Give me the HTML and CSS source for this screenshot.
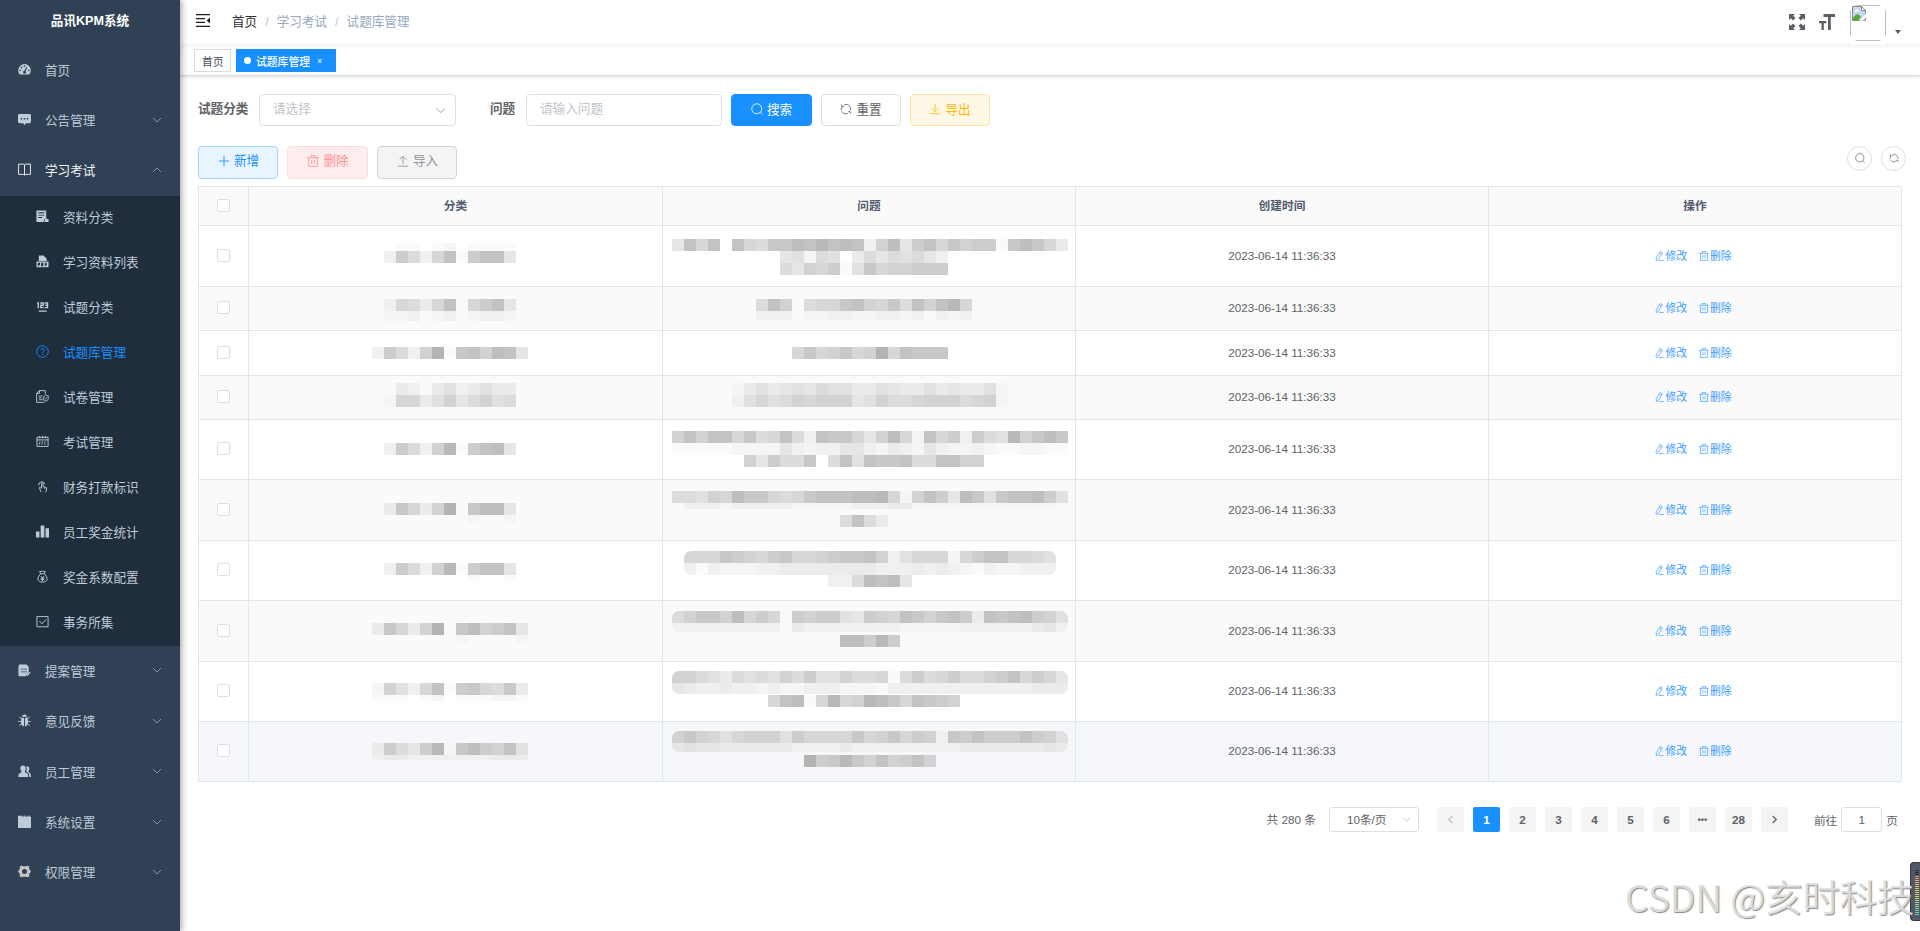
FILE: index.html
```html
<!DOCTYPE html>
<html lang="zh-CN">
<head>
    <meta charset="utf-8">
    <title>试题库管理 - 品讯KPM系统</title>
    <link rel="stylesheet" href="styles.css">
</head>
<body>
    <svg class="sprite">
        <symbol id="i-down" viewBox="0 0 10 10"><path d="M1 3l4 4 4-4" class="line"/></symbol>
        <symbol id="i-up" viewBox="0 0 10 10"><path d="M1 7l4-4 4 4" class="line"/></symbol>
        <symbol id="i-dash" viewBox="0 0 14 14"><path fill-rule="evenodd" d="M2 12.5A7 7 0 0 1 .2 8a6.8 6.8 0 0 1 13.6 0A7 7 0 0 1 12 12.5zM6.2 2.5v1.6h1.6V2.5zM3 4v1.6h1.6V4zM1.6 7.2v1.5h1.6V7.2zM10.8 7.2v1.5h1.6V7.2zM9 4.2L6.8 8.3a1.6 1.6 0 1 0 1.3.4l2-3.9z"/></symbol>
        <symbol id="i-msg" viewBox="0 0 14 14"><path fill-rule="evenodd" d="M1.500 1h11Q14 1 14 2.500v7Q14 11 12.500 11H8.500L7 13.300 5.500 11h-4Q0 11 0 9.500v-7Q0 1 1.500 1zM3 5.300v1.600h1.600V5.300zM6.200 5.300v1.600h1.600V5.300zM9.400 5.300v1.600H11V5.300z"/></symbol>
        <symbol id="i-book" viewBox="0 0 14 14"><path class="line" d="M.6 1.200h5L7 2l1.400-.8h5v11h-5L7 13l-1.400-.8h-5zM7 2v11"/></symbol>
        <symbol id="i-form" viewBox="0 0 14 14"><path fill-rule="evenodd" d="M.5.500h10.500v8L9 10l-1 3H.5zM2.500 2.500v1h6.500v-1zM2.500 5v1h6.500V5zM2.500 7.500v1h4v-1z"/><path d="M11 8l.6 1.600 2 .4v3H9l.5-3z"/></symbol>
        <symbol id="i-pdf" viewBox="0 0 14 14"><path d="M3 .5h5L11.500 4v2.500H3z"/><path fill-rule="evenodd" d="M.5 7h13v6.300H.5zM2 8.300v3.800h1v-1.300h1.300V8.300zM5.500 8.300v3.800h2.300V8.300zM9.500 8.300v3.800h1v-1.400h1.200v-1h-1.200v-.5h1.500v-.9z"/></symbol>
        <symbol id="i-num" viewBox="0 0 14 14"><path class="bold" d="M1.300 3.300h1.200V9M4.500 3.200h3.300v2.500H5.200v2.500h3M9.200 3.200h3.200v5H9.200M10 5.700h2.400M3 12h8.500"/></symbol>
        <symbol id="i-ask" viewBox="0 0 14 14"><circle class="line" cx="7" cy="7" r="6.200"/><path class="line" d="M5.200 5.600a1.800 1.800 0 1 1 2.600 1.600Q7 7.700 7 8.600M7 9.700v1.100"/></symbol>
        <symbol id="i-paper" viewBox="0 0 14 14"><path class="line" d="M10 4.500V.7H3.500L.7 3.500v9.800H9M.7 3.700h3v-3M3 6.500h4M3 8.500h3M3 10.500h4"/><path class="line" d="M10.500 5l1 1 1.700.2v2l.6.8-1.800 2.400-1.500.6-2-1.200-.8-1.800 1-2.300zM9 8.500l1.200 1.200 2-2"/></symbol>
        <symbol id="i-cal" viewBox="0 0 14 14"><path class="line" d="M1 2.500h12v9.800H1zM1 5.300h12M4 1v2.500M7 1v2.500M10 1v2.500"/><path d="M3.500 7h1.300v1.300H3.500zM6.300 7h1.300v1.300H6.300zM9 7h1.300v1.300H9zM3 9h1.300v1.300H3zM5.800 9h1.300v1.300H5.800zM9 9h1.300v1.300H9z"/></symbol>
        <symbol id="i-hand" viewBox="0 0 14 14"><path class="line" d="M3 6a3.300 3.300 0 1 1 6.500-1.500M6 8.800V3.300q.8-1 1.600 0v3.900l3.700.8v3l-1 2.300M6 8.800L3.800 8q-.5.800 0 1.300L5.500 13M9.300 8v1.500"/></symbol>
        <symbol id="i-bars" viewBox="0 0 14 14"><path d="M0 7h3.700v6.500H0zM5 .5h4v13H5zM10.300 3.500H14v10h-3.700z"/></symbol>
        <symbol id="i-bag" viewBox="0 0 14 14"><path class="line" d="M5 4L4 1.500q1.500.7 3-.5 1.500 1.200 3 .5L9 4zM5 4Q2 7 2 9.700 2.300 13 7 13t5-3.300Q12 7 9 4M5.200 6.500L7 8.500l1.800-2M5 8.700h4M5 10.300h4M7 8.500V12"/></symbol>
        <symbol id="i-check" viewBox="0 0 14 14"><path class="line" d="M1 1.700h12v11H1zM3.800 6.500l2.600 3 4.600-5"/></symbol>
        <symbol id="i-edit2" viewBox="0 0 14 14"><path fill-rule="evenodd" d="M1.500.5h7.800L11.500 3v6L8 13.200H.5v-11zM3 5v1h6.500V5zM3 8v1h6.500V8z"/><path class="bold" d="M9.500 12.800l3.500-4"/></symbol>
        <symbol id="i-bug" viewBox="0 0 14 14"><path d="M4.300 3a2.700 2.400 0 0 1 5.400 0zM3.500 4h3v9.500Q3.500 13 3.200 9.500zM7.500 4h3l.3 5.500Q10.500 13 7.500 13.500z"/><path class="line" d="M1.300 3l2.200 2M12.700 3l-2.200 2M.3 8h3M13.700 8h-3M1.300 12.600l2.300-2M12.700 12.600l-2.300-2"/></symbol>
        <symbol id="i-user" viewBox="0 0 14 14"><path d="M5.300.5a3 3.200 0 0 1 3 3.200q0 1.800-1 3 0 1.300 2.700 2.300 1 .6 1 3.800H.3q0-3 1-3.700Q4 8 3.800 6.700q-1.300-1.200-1.300-3A3 3.200 0 0 1 5.300.5z"/><path d="M9 1.500q3.300-.5 3.200 2.700 0 1.500-1 2.500 0 1 1.700 1.800 1 .7 1 4.300h-1.800q0-3.800-1.500-4.600L8.800 7q1.200-3 .2-5.500z"/></symbol>
        <symbol id="i-folder" viewBox="0 0 14 14"><path d="M0 .7h4L4.600 2h9.400v12H0zM5.500.7h3v.8h-3zM10 .7h3v.8h-3z"/></symbol>
        <symbol id="i-gear" viewBox="0 0 14 14"><path fill-rule="evenodd" d="M3.500.7l2 .7h3l2-.7 1.700 1.300-.2 2.300L14 7l-2 2.700.2 2.300-1.700 1.300-2-.7h-3l-2 .7L1.800 12 2 9.700 0 7l2-2.700L1.800 2zM7 4.200a2.800 2.800 0 1 0 .01 0z"/></symbol>
        <symbol id="i-search" viewBox="0 0 14 14"><circle class="line" cx="6.700" cy="6.700" r="5.800"/><path class="line" d="M10.800 10.800l2.600 2.600"/></symbol>
        <symbol id="i-refresh" viewBox="0 0 14 14"><path class="line" d="M1.700 8.300A5.400 5.400 0 0 1 2.600 3.800M5 2A5.400 5.400 0 0 1 12.200 5.700M12.300 6v2.300M9 12A5.400 5.400 0 0 1 2 9.500M1.500 1.800l.9 2.500 2.500-.5M12.800 12.500l-.9-2.600-2.600.6"/></symbol>
        <symbol id="i-import" viewBox="0 0 14 14"><path class="line" d="M1 13h12M7 10.500V1.500M3 5.500l4-4 4 4"/></symbol>
        <symbol id="i-export" viewBox="0 0 14 14"><path class="line" d="M1 12.500h12M7 1v9M3 6l4 4 4-4"/></symbol>
        <symbol id="i-plus" viewBox="0 0 14 14"><path class="line" d="M7 .8v12.400M.8 7h12.400"/></symbol>
        <symbol id="i-trash" viewBox="0 0 14 14"><path class="line" d="M.5 3.200h13M4.500 3V.8h5V3M2 3.200v10h10v-10M5.500 5.800v4.700M8.500 5.800v4.700"/></symbol>
        <symbol id="i-edit" viewBox="0 0 14 14"><path class="line" d="M8.800.8l2.900 1.700-5.300 9-3.200 1.800-.2-3.600zM7.600 3l2.800 1.700M7 13.300h6.500"/></symbol>
    </svg>

    <div class="app">
        <aside class="sidebar">
            <h1 class="logo">品讯KPM系统</h1>
            <ul class="menu">
                <li><svg class="icon"><use href="#i-dash"/></svg>首页</li>
                <li><svg class="icon"><use href="#i-msg"/></svg>公告管理<svg class="arrow"><use href="#i-down"/></svg></li>
                <li class="open"><svg class="icon"><use href="#i-book"/></svg>学习考试<svg class="arrow"><use href="#i-up"/></svg></li>
            </ul>
            <ul class="menu submenu">
                <li><svg class="icon"><use href="#i-form"/></svg>资料分类</li>
                <li><svg class="icon"><use href="#i-pdf"/></svg>学习资料列表</li>
                <li><svg class="icon"><use href="#i-num"/></svg>试题分类</li>
                <li class="active"><svg class="icon"><use href="#i-ask"/></svg>试题库管理</li>
                <li><svg class="icon"><use href="#i-paper"/></svg>试卷管理</li>
                <li><svg class="icon"><use href="#i-cal"/></svg>考试管理</li>
                <li><svg class="icon"><use href="#i-hand"/></svg>财务打款标识</li>
                <li><svg class="icon"><use href="#i-bars"/></svg>员工奖金统计</li>
                <li><svg class="icon"><use href="#i-bag"/></svg>奖金系数配置</li>
                <li><svg class="icon"><use href="#i-check"/></svg>事务所集</li>
            </ul>
            <ul class="menu">
                <li><svg class="icon"><use href="#i-edit2"/></svg>提案管理<svg class="arrow"><use href="#i-down"/></svg></li>
                <li><svg class="icon"><use href="#i-bug"/></svg>意见反馈<svg class="arrow"><use href="#i-down"/></svg></li>
                <li><svg class="icon"><use href="#i-user"/></svg>员工管理<svg class="arrow"><use href="#i-down"/></svg></li>
                <li><svg class="icon"><use href="#i-folder"/></svg>系统设置<svg class="arrow"><use href="#i-down"/></svg></li>
                <li><svg class="icon gear"><use href="#i-gear"/></svg>权限管理<svg class="arrow"><use href="#i-down"/></svg></li>
            </ul>
        </aside>

        <main class="main">
            <header class="navbar">
                <svg class="hamburger" viewBox="0 0 14 13"><path d="M0 0h14v1.300H0zM0 4h9v1.300H0zM0 7.700h9V9H0zM0 11.700h14V13H0zM14 3.500v6l-3.300-3z"/></svg>
                <nav class="breadcrumb"><b>首页</b><i>/</i><span>学习考试</span><i>/</i><span>试题库管理</span></nav>
                <div class="right-menu">
                    <svg class="tool" viewBox="0 0 16 16"><path d="M0 0h6L4.200 1.800l2.300 2.300-2.400 2.400-2.300-2.300L0 6zM16 0v6l-1.800-1.800-2.300 2.300-2.400-2.400 2.300-2.300L10 0zM0 16v-6l1.800 1.800 2.300-2.300 2.400 2.400-2.300 2.300L6 16zM16 16h-6l1.800-1.800-2.300-2.300 2.400-2.400 2.300 2.300L16 10z"/></svg>
                    <svg class="tool" viewBox="0 0 16 16"><path d="M4.500 0H16v3h-4.200v13H9V3H4.500zM0 7h7.300v2.300h-2.500V16H2.500V9.300H0z"/></svg>
                    <div class="avatar">
                        <svg viewBox="0 0 36 36"><path d="M5.500.5h25M5.500 35.500h25M.5 5.500v25M35.500 5.500v25" fill="none" stroke="#c0c0c0"/><g transform="translate(2 1)"><path d="M.5.500h9L13.500 4.500v10H.5z" fill="#c6d7f5" stroke="#8a8a8a"/><path d="M9.500.5v4h4z" fill="#fff" stroke="#8a8a8a"/><path d="M2.500 5.500q0-1.500 1.500-1.500 1-1.300 2 0 1.500 0 1.500 1.500z" fill="#fff"/><path d="M1 14v-2q3-4.500 5.500-3.500L9 10.500 6.500 14z" fill="#4fae32"/><path d="M7 15.500L14.500 7v3.500L10 15.500z" fill="#fff"/></g></svg>
                    </div>
                    <span class="caret"></span>
                </div>
            </header>
            <div class="tags">
                <span class="tag">首页</span>
                <span class="tag current"><i></i>试题库管理<em>×</em></span>
            </div>

            <section class="content">
                <div class="filters">
                    <label>试题分类</label>
                    <div class="input select">请选择<svg><use href="#i-down"/></svg></div>
                    <label class="second">问题</label>
                    <div class="input question">请输入问题</div>
                    <button class="btn primary"><svg><use href="#i-search"/></svg>搜索</button>
                    <button class="btn"><svg><use href="#i-refresh"/></svg>重置</button>
                    <button class="btn warning"><svg><use href="#i-export"/></svg>导出</button>
                </div>
                <div class="toolbar">
                    <button class="btn add"><svg><use href="#i-plus"/></svg>新增</button>
                    <button class="btn danger"><svg><use href="#i-trash"/></svg>删除</button>
                    <button class="btn info"><svg><use href="#i-import"/></svg>导入</button>
                    <div class="circles">
                        <button class="circle"><svg><use href="#i-search"/></svg></button>
                        <button class="circle"><svg><use href="#i-refresh"/></svg></button>
                    </div>
                </div>

                <table class="table">
                    <colgroup><col class="c-check"><col class="c-type"><col><col><col></colgroup>
                    <thead>
                        <tr><th><span class="checkbox"></span></th><th>分类</th><th>问题</th><th>创建时间</th><th>操作</th></tr>
                    </thead>
                    <tbody id="rows"></tbody>
                </table>

                <div class="pagination">
                    <span class="total">共 280 条</span>
                    <span class="size">10条/页<svg><use href="#i-down"/></svg></span>
                    <div class="pager">
                        <span class="off"><svg viewBox="0 0 10 10"><path class="bold" d="M7 1L3 5l4 4"/></svg></span>
                        <span class="on">1</span><span>2</span><span>3</span><span>4</span><span>5</span><span>6</span>
                        <span class="more">•••</span><span>28</span>
                        <span><svg viewBox="0 0 10 10"><path class="bold" d="M3 1l4 4-4 4"/></svg></span>
                    </div>
                    <span class="jump">前往<span class="page-input">1</span>页</span>
                </div>
            </section>
        </main>
    </div>

    <div class="side-widget"><i></i></div>
    <div class="watermark">CSDN @亥时科技</div>

    <script src="rows.js"></script>
</body>
</html>
```

FILE: styles.css
```css
* {
    box-sizing: border-box;
}
body {
    margin: 0;
    height: 931px;
    overflow: hidden;
    position: relative;
    font-family: "Liberation Sans", "Noto Sans CJK SC", sans-serif;
    font-size: 12.6px;
    color: #606266;
    background: #fff;
}
ul {
    list-style: none;
    margin: 0;
    padding: 0;
}
i, em {
    font-style: normal;
}
button {
    font-family: inherit;
}
svg {
    fill: currentColor;
    flex: none;
}
.sprite {
    display: none;
}
.line {
    fill: none;
    stroke: currentColor;
    stroke-width: 1;
}
.bold {
    fill: none;
    stroke: currentColor;
    stroke-width: 1.5;
}
.app {
    display: flex;
    height: 931px;
}

/* sidebar */
.sidebar {
    width: 180px;
    flex: none;
    background: #304156;
    box-shadow: 2px 0 6px rgba(0,21,41,.35);
    z-index: 2;
}
.logo {
    margin: 0;
    height: 45px;
    line-height: 43px;
    text-align: center;
    font-size: 12.6px;
    color: #fff;
}
.menu li {
    display: flex;
    align-items: center;
    height: 50.4px;
    padding: 0 18px 2px;
    color: #bfcbd9;
}
.menu .icon {
    width: 13px;
    height: 13px;
    margin-right: 14px;
}
.menu .gear {
    color: #c4c4c4;
}
.menu .arrow {
    width: 10px;
    height: 10px;
    margin-left: auto;
    color: #909399;
}
.menu .open {
    color: #f4f4f5;
}
.submenu {
    background: #1f2d3d;
}
.submenu li {
    height: 45px;
    padding: 0 18px 4px 36px;
}
.submenu .active {
    color: #1890ff;
}

/* top */
.main {
    flex: 1;
    min-width: 0;
}
.navbar {
    display: flex;
    align-items: center;
    height: 45px;
    padding: 0 18px 4px 16px;
    box-shadow: 0 1px 4px rgba(0,21,41,.08);
}
.hamburger {
    width: 14px;
    height: 13px;
    color: #1b1b1b;
    margin-right: 22px;
}
.breadcrumb {
    color: #97a8be;
}
.breadcrumb b {
    font-weight: normal;
    color: #303133;
}
.breadcrumb i {
    margin: 0 8px;
    color: #c0c4cc;
}
.right-menu {
    display: flex;
    align-items: center;
    margin-left: auto;
    padding-right: 1px;
    color: #5a5e66;
}
.tool {
    width: 16px;
    height: 16px;
    margin: 3px 14px 0 0;
}
.avatar {
    width: 36px;
    height: 36px;
    margin: 5px 9px 0 1px;
}
.avatar svg {
    display: block;
    width: 36px;
    height: 36px;
}
.caret {
    margin-top: 23px;
    border: 3.5px solid transparent;
    border-top: 4px solid #5a5e66;
    border-bottom: 0;
}
.tags {
    display: flex;
    gap: 5px;
    height: 31px;
    padding: 4px 14px;
    border-bottom: 1px solid #d8dce5;
    box-shadow: 0 1px 3px rgba(0,0,0,.12), 0 0 3px rgba(0,0,0,.04);
}
.tag {
    display: flex;
    align-items: center;
    width: 37px;
    height: 23px;
    padding: 0 0 0 7px;
    border: 1px solid #d8dce5;
    font-size: 10.8px;
    color: #495060;
}
.tag.current {
    width: 100px;
    background: #1890ff;
    border-color: #1890ff;
    color: #fff;
    font-weight: 500;
}
.tag i {
    width: 7px;
    height: 7px;
    border-radius: 50%;
    background: #fff;
    margin-right: 5px;
}
.tag em {
    margin-left: 7px;
    font-size: 9px;
}

/* content */
.content {
    padding: 18px;
}
.filters, .toolbar {
    display: flex;
    gap: 9px;
}
.filters label {
    font-weight: bold;
    line-height: 30px;
    width: 52px;
}
.filters .second {
    width: 27px;
    margin-left: 25px;
}
.input {
    width: 197px;
    height: 32px;
    line-height: 28px;
    padding: 0 13px;
    border: 1px solid #dcdfe6;
    border-radius: 4px;
    color: #c0c4cc;
}
.question {
    width: 196px;
}
.select {
    display: flex;
    justify-content: space-between;
    padding-right: 9px;
}
.select svg {
    width: 11px;
    height: 11px;
    margin-top: 10px;
}
.btn {
    display: flex;
    align-items: center;
    justify-content: center;
    width: 80px;
    height: 32px;
    padding: 0 0 4px;
    border: 1px solid #dcdfe6;
    border-radius: 4px;
    background: #fff;
    color: #606266;
    font-size: 12.6px;
}
.btn svg {
    width: 12px;
    height: 12px;
    margin: 2px 4px 0 0;
}
.btn.primary {
    width: 81px;
    background: #1890ff;
    border-color: #1890ff;
    color: #fff;
}
.btn.warning {
    background: #fff8e6;
    border-color: #ffe399;
    color: #ffba00;
}
.toolbar {
    height: 40px;
    margin-top: 20px;
}
.toolbar .btn {
    height: 33px;
    padding-bottom: 6px;
    padding-left: 1px;
}
.btn.add {
    background: #e8f4ff;
    border-color: #a3d3ff;
    color: #1890ff;
}
.toolbar .danger {
    width: 81px;
    background: #ffeded;
    border-color: #ffdbdb;
    color: #ff9292;
}
.btn.info {
    background: #f4f4f5;
    border-color: #d3d4d6;
    color: #909399;
}
.circles {
    display: flex;
    gap: 9px;
    margin: 0 -4px 0 auto;
}
.circle {
    display: flex;
    align-items: center;
    justify-content: center;
    width: 25px;
    height: 25px;
    padding: 0 0 1px;
    border: 1px solid #dcdfe6;
    border-radius: 50%;
    background: #fff;
    color: #606266;
}
.circle svg {
    width: 10px;
    height: 10px;
}

/* table */
.table {
    width: 1704px;
    table-layout: fixed;
    border-spacing: 0;
    border: solid #dfe6ec;
    border-width: 1px 0 0 1px;
    font-size: 11.7px;
    text-align: center;
}
.table col {
    width: 413px;
}
.table .c-check {
    width: 50px;
}
.table .c-type {
    width: 414px;
}
.table th, .table td {
    padding: 0;
    border: solid #dfe6ec;
    border-width: 0 1px 1px 0;
    line-height: 16px;
}
.table td {
    padding-bottom: 1px;
}
.table td.masked {
    padding: 0;
}
.table th {
    height: 39px;
    background: #fafafa;
    color: #515a6e;
}
.table tr:nth-child(even) td {
    background: #fafafa;
}
.table tr.hover td {
    background: #f5f7fa;
}
.checkbox {
    display: block;
    width: 13px;
    height: 13px;
    margin: 0 auto 1px;
    border: 1px solid #dcdfe6;
    border-radius: 2px;
    background: #fff;
}
.mosaic {
    display: block;
    width: 100%;
}
.mosaic .round {
    clip-path: inset(0 round 7px);
}
.ops {
    display: flex;
    justify-content: center;
    gap: 12px;
    padding-right: 4px;
    font-size: 10.8px;
    color: #409eff;
}
.ops span {
    display: flex;
    align-items: center;
}
.ops svg {
    width: 10px;
    height: 10px;
    margin-right: 1px;
}

/* pagination */
.pagination {
    display: flex;
    align-items: center;
    justify-content: flex-end;
    height: 25px;
    margin-top: 25px;
    padding-right: 4px;
    font-size: 11.7px;
}
.size {
    display: flex;
    align-items: center;
    justify-content: space-between;
    width: 90px;
    height: 25px;
    margin: 0 18px 0 13px;
    padding: 0 7px 2px 17px;
    border: 1px solid #dcdfe6;
    border-radius: 3px;
}
.size svg {
    width: 9px;
    height: 9px;
    margin-top: 2px;
    color: #c0c4cc;
}
.total {
    padding-bottom: 2px;
}
.pager {
    display: flex;
    gap: 9px;
}
.pager span {
    display: flex;
    align-items: center;
    justify-content: center;
    width: 27px;
    height: 25px;
    border-radius: 2px;
    background: #f4f4f5;
    color: #606266;
    font-weight: bold;
}
.pager svg {
    width: 9px;
    height: 9px;
}
.pager .on {
    background: #1890ff;
    color: #fff;
}
.pager .off {
    color: #c0c4cc;
}
.pager .more {
    font-size: 9.5px;
}
.jump {
    display: flex;
    align-items: center;
    margin-left: 26px;
}
.page-input {
    width: 41px;
    height: 25px;
    line-height: 23px;
    margin: 0 4px;
    border: 1px solid #dcdfe6;
    border-radius: 3px;
    text-align: center;
}

/* floating */
.side-widget {
    position: absolute;
    z-index: 3;
    right: 0;
    top: 862px;
    width: 10px;
    height: 59px;
    padding: 7px 1px 6px 4px;
    border: 1px solid #343845;
    border-right: 0;
    border-radius: 4px 0 0 4px;
    background: #535868;
}
.side-widget i {
    display: block;
    height: 45px;
    background: repeating-linear-gradient(transparent 0 1px, #535868 1px 2px), linear-gradient(#2b2e38 0 12%, #e8876f 13%, #ecc85e 35%, #b8de7a 65%, #62cdb8);
}
.watermark {
    position: absolute;
    z-index: 4;
    left: 1625px;
    top: 869px;
    white-space: nowrap;
    font: 350 37.3px/54px "Noto Sans CJK SC", sans-serif;
    color: rgba(225,225,225,.92);
    text-shadow: 1px 1px 1px rgba(100,100,100,.75);
}
```

FILE: rows.js
```js
// Masked cells: each piece is [x, y, last row height, ...rows of 12px blocks],
// one hex digit per block, 0 or . = transparent, f = darkest.
// A trailing 1 rounds the corners of the piece.
var rows = [
    { h: 61, type: [[135, 17, 8, '01101201111'], [135, 25, 12, '3a738c1acc5']],
      ask: [[9, 13, 12, '5c8c.c87bbdcecdc39d5ac8b9aa1bdb84'], [117, 25, 12, '56276.47576753', '7598a16b899aaa']] },
    { h: 44, type: [[135, 12, 10, '38748c18ac5', '22312312332']],
      ask: [[93, 12, 9, '7c9.788bc98b7c9ce8', '333122332233231323']] },
    { h: 45, type: [[123, 16, 12, '3a739f1bc9dc5']],
      ask: [[129, 16, 12, '8b89b89f8cbbb']] },
    { h: 44, type: [[135, 7, 12, '14314634644', '28846957967']],
      ask: [[69, 7, 12, '24645657664465446454462', '36867989995697789997892']] },
    { h: 60, type: [[135, 23, 12, '3a739e1acd5']],
      ask: [[9, 11, 12, '9c9cc8b78c73cbb859d82c8a3a76e9bdb', '111112222532335532432532232112211'], [81, 35, 12, '95a77b.7c6cbbc77cc99']] },
    { h: 61, type: [[135, 23, 8, '4b849f1bdd5', '00000002002']],
      ask: [[9, 11, 6, '77698dbb878bcccdde829ca5db6bccda6', '133323333322222333442222222222221'], [177, 35, 12, '7c74']] },
    { h: 60, type: [[135, 22, 6, '3a739e1acc5', '00000001001']],
      ask: [[21, 10, 12, '888ba98ab889abbc93688828acc8876', '3132223344444444333434321322333', 1], [165, 34, 12, '337dcd5']] },
    { h: 61, type: [[123, 22, 8, '4b849f1bd9ac5', '0000000200002']],
      ask: [[9, 10, 9, '79bb9d8a81a9aa65a98cb9bca4cbcda96', '333333333143333333322222333333453', 1], [177, 34, 12, 'ddaea']] },
    { h: 60, type: [[123, 21, 6, '29638c1ab87b4', '1110120111221']],
      ask: [[9, 9, 11, '99764767697a66977817a78a779ac8a85', '543343323223332221333333333333444', 1], [105, 33, 12, '8cd18e89edb8cba9']] },
    { h: 60, hover: true, type: [[123, 21, 5, '4a75ae2bda9c6', '3443333333444']],
      ask: [[9, 9, 9, '9b98689996a8888b89b8a93bacaaaca96', '565544444433334333333333444444454', 1], [141, 33, 12, 'fabeb9c9ac9']] }
];

function mosaic(pieces, height) {
    var html = '';
    pieces.forEach(function(p) {
        var lines = p.slice(3).filter(function(s) { return typeof s === 'string'; });
        html += p[p.length - 1] === 1 ? '<g class="round">' : '<g>';
        lines.forEach(function(line, r) {
            var h = r === lines.length - 1 ? p[2] : 12;
            for (var c = 0; c < line.length; c++) {
                var v = parseInt(line[c], 16);
                if (!v) continue;
                var g = 255 - v * 5;
                html += '<rect x="' + (p[0] + c * 12) + '" y="' + (p[1] + r * 12) + '" width="12" height="' + h +
                    '" fill="rgb(' + g + ',' + g + ',' + (g + 1) + ')"/>';
            }
        });
        html += '</g>';
    });
    return '<svg class="mosaic" height="' + (height - 1) + '" shape-rendering="crispEdges">' + html + '</svg>';
}

document.getElementById('rows').innerHTML = rows.map(function(row) {
    return '<tr' + (row.hover ? ' class="hover"' : '') + '>' +
        '<td><span class="checkbox"></span></td>' +
        '<td class="masked">' + mosaic(row.type, row.h) + '</td>' +
        '<td class="masked">' + mosaic(row.ask, row.h) + '</td>' +
        '<td>2023-06-14 11:36:33</td>' +
        '<td><div class="ops"><span><svg><use href="#i-edit"/></svg>修改</span>' +
        '<span><svg><use href="#i-trash"/></svg>删除</span></div></td></tr>';
}).join('');
```
